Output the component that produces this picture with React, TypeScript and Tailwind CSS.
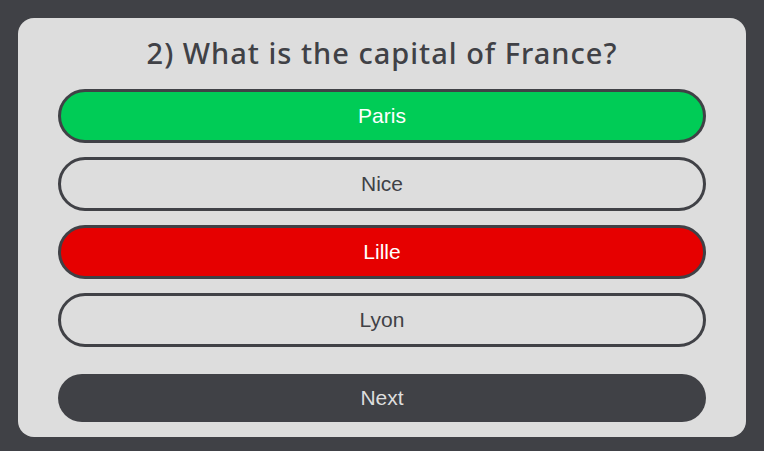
const answers = [
  { label: "Paris", tone: "bg-[#00cc56] text-white" },
  { label: "Nice", tone: "text-[#404146]" },
  { label: "Lille", tone: "bg-[#e60000] text-white" },
  { label: "Lyon", tone: "text-[#404146]" },
];

export default function App() {
  return (
    <div className="min-h-screen bg-[#404146] px-[18px] pt-[18px] pb-[14px]">
      <main className="rounded-2xl bg-[#dddddd] px-10 py-[15px] font-['Liberation_Sans',Arial,sans-serif]">
        <h1 className="text-center font-['Noto_Sans',sans-serif] text-[29px] leading-10 font-medium tracking-[1px] text-[#404146]">
          2) What is the capital of France?
        </h1>
        <div className="mt-4 flex flex-col gap-[14px]">
          {answers.map(({ label, tone }) => (
            <button
              key={label}
              type="button"
              className={`h-[54px] w-full rounded-full border-3 border-[#404146] text-[21px] leading-6 ${tone}`}
            >
              {label}
            </button>
          ))}
        </div>
        <button
          type="button"
          className="mt-[27px] h-12 w-full rounded-full bg-[#404146] text-[21px] leading-6 text-[#dddddd]"
        >
          Next
        </button>
      </main>
    </div>
  );
}
